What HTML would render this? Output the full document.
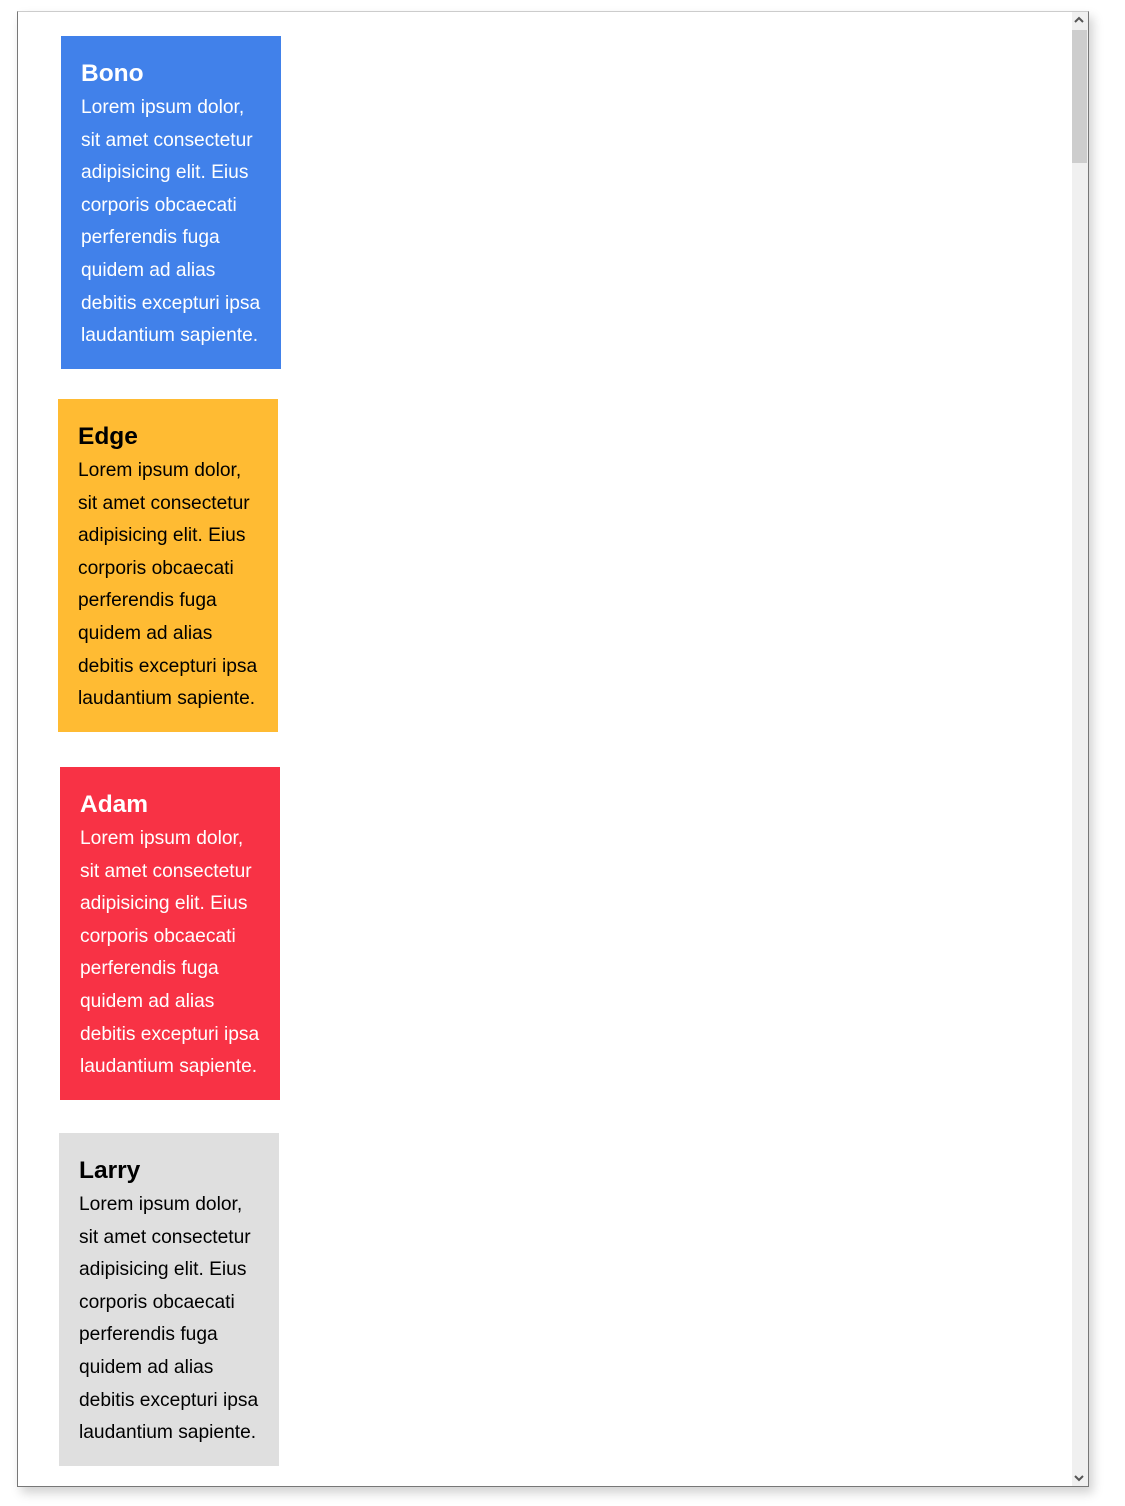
<!DOCTYPE html>
<html><head><meta charset="utf-8"><style>
html,body{margin:0;padding:0;background:#fff;width:1125px;height:1506px;overflow:hidden;font-family:"Liberation Sans",sans-serif}
.win{position:absolute;left:17px;top:11px;width:1070px;height:1474px;border-left:1px solid #777;border-right:1px solid #777;border-bottom:1px solid #777;border-top:1px solid #ccc;box-shadow:4px 6px 10px rgba(0,0,0,.18);background:#fff}
.sb{position:absolute;left:1072px;top:12px;width:16px;height:1474px;background:#f0f0f0}
.thumb{position:absolute;left:1072px;top:30px;width:15px;height:133px;background:#cdcdcd}
.card{position:absolute;width:180px;padding:21px 20px 17px 20px;height:295px;box-sizing:content-box;overflow:hidden}
.card h2{margin:0;font-size:24.5px;font-weight:bold;line-height:33px}
.card p{margin:2px 0 0;font-size:19.2px;line-height:32.6px;white-space:nowrap}
</style></head><body>
<div class="win"></div>
<div class="sb"></div><div class="thumb"></div>
<svg style="position:absolute;left:1074px;top:16px" width="10" height="8"><path d="M1 6 L5 2 L9 6" stroke="#555" stroke-width="2" fill="none"/></svg>
<svg style="position:absolute;left:1074px;top:1474px" width="10" height="8"><path d="M1 2 L5 6 L9 2" stroke="#555" stroke-width="2" fill="none"/></svg>
<div class="card" style="left:61px;top:36px;background:#4181ea;color:#fff"><h2>Bono</h2><p>Lorem ipsum dolor,<br>sit amet consectetur<br>adipisicing elit. Eius<br>corporis obcaecati<br>perferendis fuga<br>quidem ad alias<br>debitis excepturi ipsa<br>laudantium sapiente.</p></div>
<div class="card" style="left:58px;top:399px;background:#ffbb33;color:#000"><h2>Edge</h2><p>Lorem ipsum dolor,<br>sit amet consectetur<br>adipisicing elit. Eius<br>corporis obcaecati<br>perferendis fuga<br>quidem ad alias<br>debitis excepturi ipsa<br>laudantium sapiente.</p></div>
<div class="card" style="left:60px;top:767px;background:#f83245;color:#fff"><h2>Adam</h2><p>Lorem ipsum dolor,<br>sit amet consectetur<br>adipisicing elit. Eius<br>corporis obcaecati<br>perferendis fuga<br>quidem ad alias<br>debitis excepturi ipsa<br>laudantium sapiente.</p></div>
<div class="card" style="left:59px;top:1133px;background:#dfdfdf;color:#000"><h2>Larry</h2><p>Lorem ipsum dolor,<br>sit amet consectetur<br>adipisicing elit. Eius<br>corporis obcaecati<br>perferendis fuga<br>quidem ad alias<br>debitis excepturi ipsa<br>laudantium sapiente.</p></div>
</body></html>
